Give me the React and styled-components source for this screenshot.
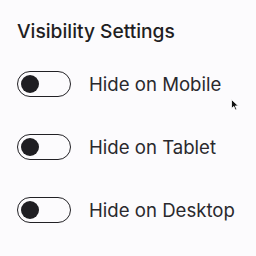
import styled, { createGlobalStyle } from "styled-components"

const GlobalStyle = createGlobalStyle`
    body {
        margin: 0;
        background: #fcfbfd;
        font-family: Inter, "Noto Sans", sans-serif;
        color: #222125;
    }
`

const Panel = styled.div`
    position: relative;
    width: 256px;
    height: 256px;
    padding: 19px 17px;
    box-sizing: border-box;
`

const Title = styled.div`
    font-size: 19.2px;
    font-weight: 500;
    line-height: 24px;
    margin-bottom: 28px;
    color: #1f1e22;
`

const List = styled.div`
    display: flex;
    flex-direction: column;
    gap: 37px;
`

const Row = styled.label`
    display: flex;
    align-items: center;
    gap: 18px;
`

const Track = styled.span`
    width: 54px;
    height: 26px;
    box-sizing: border-box;
    border: 1.5px solid #222125;
    border-radius: 13px;
    display: flex;
    align-items: center;
    padding-left: 3px;
`

const Knob = styled.span`
    width: 18px;
    height: 18px;
    border-radius: 50%;
    background: #1f1e22;
`

const Label = styled.span`
    font-size: 18.6px;
    line-height: 26px;
    color: #2a292d;
`

const Cursor = styled.svg`
    position: absolute;
    left: 231px;
    top: 99px;
`

const items = ["Hide on Mobile", "Hide on Tablet", "Hide on Desktop"]

const App = () => {
  return (
    <Panel>
        <GlobalStyle />
        <Title>Visibility Settings</Title>
        <List>
            {items.map(text => (
                <Row key={text}>
                    <Track><Knob /></Track>
                    <Label>{text}</Label>
                </Row>
            ))}
        </List>
        <Cursor width="8" height="12" viewBox="0 0 8 12">
            <path d="M0.5 0.5 L0.5 9.5 L2.8 7.4 L4.4 11 L5.8 10.4 L4.3 6.9 L7.3 6.9 Z" fill="#111" stroke="#fff" strokeWidth="0.8" />
        </Cursor>
    </Panel>
  )
}

export default App
